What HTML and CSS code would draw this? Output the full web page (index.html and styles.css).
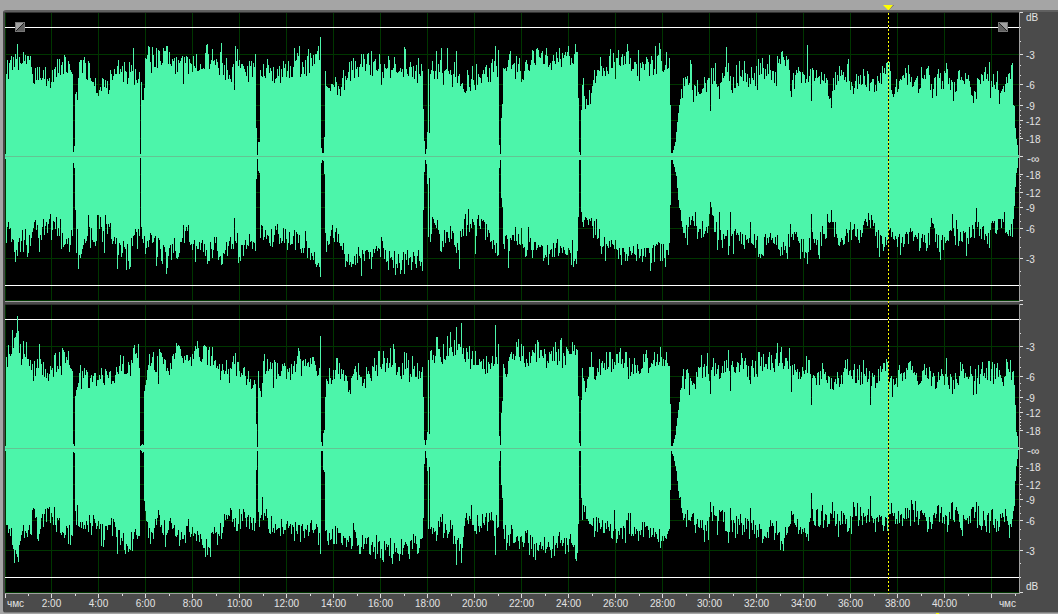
FILE: index.html
```html
<!DOCTYPE html>
<html lang="ru">
<head>
<meta charset="utf-8">
<title>Waveform</title>
<link rel="stylesheet" href="styles.css">
</head>
<body>
<main class="editor">
  <div class="strip"></div>
  <div class="frame">
    <section class="row">
      <div class="view">
        <svg class="wave" data-channel="left" viewBox="0 0 1014 289" preserveAspectRatio="none" role="img" aria-label="Left channel"></svg>
        <button class="fade fade-in" aria-label="Fade in"><svg viewBox="0 0 10 10"><path class="fade-light" d="M1 1H9L1 9Z"/><path class="fade-dark" d="M9 1V9H1Z"/><path class="fade-edge" d="M1 9L9 1"/></svg></button>
        <button class="fade fade-out" aria-label="Fade out"><svg viewBox="0 0 10 10"><path class="fade-light" d="M1 1H9V9Z"/><path class="fade-dark" d="M1 1V9H9Z"/><path class="fade-edge" d="M1 1L9 9"/></svg></button>
      </div>
      <div class="scale">
        <svg class="ticks" viewBox="0 0 4 289" preserveAspectRatio="none"></svg>
        <div class="levels">
          <div class="g42 unit"><span>dB</span></div>
          <div class="g30"><span>-3</span></div>
          <div class="g21"><span>-6</span></div>
          <div class="g15"><span>-9</span></div>
          <div class="g18"><span>-12</span></div>
          <div class="g18"><span>-18</span></div>
          <div class="g18 inf"><span>-∞</span></div>
          <div class="g18"><span>-18</span></div>
          <div class="g15"><span>-12</span></div>
          <div class="g21"><span>-9</span></div>
          <div class="g30"><span>-6</span></div>
          <div class="g43"><span>-3</span></div>
        </div>
      </div>
    </section>
    <div class="divider"></div>
    <section class="row">
      <div class="view">
        <svg class="wave" data-channel="right" viewBox="0 0 1014 289" preserveAspectRatio="none" role="img" aria-label="Right channel"></svg>
      </div>
      <div class="scale">
        <svg class="ticks" viewBox="0 0 4 289" preserveAspectRatio="none"></svg>
        <div class="levels">
          <div class="g42"></div>
          <div class="g30"><span>-3</span></div>
          <div class="g21"><span>-6</span></div>
          <div class="g15"><span>-9</span></div>
          <div class="g18"><span>-12</span></div>
          <div class="g18"><span>-18</span></div>
          <div class="g18 inf"><span>-∞</span></div>
          <div class="g18"><span>-18</span></div>
          <div class="g15"><span>-12</span></div>
          <div class="g21"><span>-9</span></div>
          <div class="g30"><span>-6</span></div>
          <div class="g43 last"><span>-3</span><span>dB</span></div>
        </div>
      </div>
    </section>
    <div class="timeline">
      <svg class="time-ticks" viewBox="0 0 1014 4" preserveAspectRatio="none"></svg>
      <div class="times">
        <span class="first">чмс</span><span>2:00</span><span>4:00</span><span>6:00</span><span>8:00</span><span>10:00</span><span>12:00</span><span>14:00</span><span>16:00</span><span>18:00</span><span>20:00</span><span>22:00</span><span>24:00</span><span>26:00</span><span>28:00</span><span>30:00</span><span>32:00</span><span>34:00</span><span>36:00</span><span>38:00</span><span>40:00</span><span class="final">чмс</span>
      </div>
    </div>
    <div class="track">
      <svg class="marker" viewBox="0 0 11 6"><path class="marker-shade" d="M10 0H11L6 5V4Z"/><path class="marker-fill" d="M0 0H10L6 5H5Z"/></svg>
      <div class="cursor"></div>
    </div>
  </div>
  <div class="foot"><i class="cue"></i></div>
</main>
<script src="wave.js"></script>
</body>
</html>
```
FILE: styles.css
```css
* { box-sizing: border-box; }
body {
  margin: 0;
  background: #a5a5a5;
  color: #e4e4e4;
  font: 10px/12px "Liberation Sans", Arial, sans-serif;
}
.editor {
  display: flex;
  flex-direction: column;
  min-height: 100vh;
}
.strip { height: 10px; }
.frame {
  position: relative;
  flex: 1;
  display: flex;
  flex-direction: column;
  margin-left: 3px;
  border-top: 2px solid #606060;
  border-left: 2px solid #484848;
  border-bottom: 1px solid #7e7e7e;
  border-radius: 3px 0 0 3px;
  background: #4b4b4b;
}
.row {
  flex: 1;
  display: grid;
  grid-template-columns: 1fr 39px;
  min-height: 200px;
}
.view {
  position: relative;
  background: #000;
  border-bottom: 1px solid #a0a0a0;
}
.wave {
  position: absolute;
  inset: 0;
  width: 100%;
  height: 100%;
  shape-rendering: crispEdges;
}
.edge { fill: #333; }
.grid { fill: #003600; }
.limit { fill: #fff; }
.body { fill: #4cf5aa; }
.axis { fill: #63c493; }
.fade {
  position: absolute;
  top: 10px;
  width: 10px;
  height: 10px;
  padding: 0;
  border: 0;
  background: #777;
}
.fade svg { display: block; width: 10px; height: 10px; }
.fade-in { left: 10px; }
.fade-out { right: 11px; }
.fade-light { fill: #a0a0a0; }
.fade-dark { fill: #606060; }
.fade-edge { stroke: #222; stroke-width: 1; }
.scale {
  display: flex;
  gap: 3px;
  padding-bottom: 1px;
  border-left: 1px solid #a0a0a0;
}
.ticks { width: 3px; height: 100%; }
.tick { fill: #ddd; shape-rendering: crispEdges; }
.levels {
  flex: 1;
  display: flex;
  flex-direction: column;
}
.levels div { min-height: 0; flex-basis: 0; }
.levels span { display: block; margin-top: -4px; }
.levels .unit span { margin-top: 0; }
.levels .inf span { margin-top: -3px; padding-left: 1px; font-size: 12px; }
.levels .last {
  display: flex;
  flex-direction: column;
  justify-content: space-between;
}
.g42 { flex-grow: 42; }
.g43 { flex-grow: 43; }
.g30 { flex-grow: 30; }
.g21 { flex-grow: 21; }
.g15 { flex-grow: 15; }
.g18 { flex-grow: 18; }
.divider { height: 2px; }
.timeline {
  height: 18px;
  margin-right: 39px;
}
.time-ticks { display: block; width: 100%; height: 4px; }
.times {
  display: grid;
  grid-template-columns: 23fr repeat(20, 47fr) 51fr;
}
.times span {
  min-width: 0;
  text-align: center;
  white-space: nowrap;
}
.times .first { text-align: left; padding-left: 2px; }
.times .final { text-align: right; padding-right: 3px; }
.track {
  position: absolute;
  top: -7px;
  bottom: 18px;
  left: 0;
  right: 39px;
  pointer-events: none;
}
.marker {
  position: absolute;
  left: 87.1%;
  top: 0;
  width: 11px;
  height: 6px;
  margin-left: -5px;
}
.marker-fill { fill: #ff0; }
.marker-shade { fill: #555; }
.cursor {
  position: absolute;
  left: 87.1%;
  top: 8px;
  bottom: 0;
  width: 1px;
  background: repeating-linear-gradient(#ff0 0 2px, #000 2px 4px);
}
.foot { height: 1px; padding-left: 936px; }
.cue { display: block; width: 3px; height: 1px; background: #ff0; }
```
FILE: wave.js
```js
// Envelope points are "x:y" pairs; "spikes" are single columns laid over them.
const channels = {
  left: {
    mid: 156,
    top: "5:76 7:72 10:65 17:58 24:58 31:62 34:82 40:74 45:74 52:76 58:72 65:63 70:70 72:74 73:152 74:146 75:94 77:90 80:66 85:65 90:78 95:82 99:96 104:84 108:86 112:80 118:68 125:78 130:68 136:76 139:72 140:154 141:82 142:100 143:100 144:88 145:60 150:62 160:62 170:58 180:66 190:60 197:68 205:60 212:62 222:68 230:74 240:62 250:72 255:68 256:128 257:155 258:142 259:142 260:70 262:82 266:68 274:76 285:70 295:62 300:72 310:60 319:60 320:37 321:148 322:153 323:153 324:137 325:80 330:84 337:90 345:74 352:68 362:66 372:66 390:67 400:66 412:72 422:71 423:109 424:141 425:154 426:149 427:132 428:69 429:133 430:72 440:74 455:74 465:85 470:80 480:76 490:70 498:70 499:145 500:154 501:118 502:104 503:70 510:62 521:74 530:62 540:58 550:64 560:58 570:60 577:58 578:98 579:152 580:155 581:110 582:83 585:105 590:94 600:70 610:62 620:62 628:58 634:70 645:66 652:62 660:60 668:68 669:58 670:105 671:153 672:153 673:150 675:142 677:122 679:105 681:94 686:80 691:84 697:92 702:84 707:84 714:76 720:84 726:72 731:86 737:76 745:67 750:82 757:80 762:64 767:72 774:80 780:62 788:64 791:90 796:80 803:76 813:74 820:74 826:85 831:96 837:74 842:80 848:72 853:86 860:82 869:86 875:86 880:76 887:64 892:92 899:78 905:74 912:86 918:86 925:72 932:88 938:80 944:78 953:90 958:80 966:76 973:92 980:80 987:74 991:88 996:82 1000:92 1006:84 1012:66 1013:105 1014:106 1015:128 1016:139 1017:145 1018:155",
    topSpikes: "17:44 64:55 133:48 166:46 183:84 206:45 207:44 221:43 234:90 235:46 237:49 255:54 299:46 308:49 337:95 344:90 371:51 381:85 404:47 405:49 436:51 441:48 447:48 456:51 465:93 495:46 498:50 510:51 521:82 536:49 546:48 568:46 577:52 613:53 615:79 626:52 638:50 659:43 690:60 691:64 693:102 710:111 713:68 719:99 726:47 758:59 762:58 769:55 777:56 779:59 791:97 807:45 811:101 831:108 839:66 863:69 887:62 908:65 921:67 928:66 932:98 946:63 953:101 973:103 976:99 989:62 990:98 999:104 1012:63",
    bottom: "5:230 9:226 13:248 18:252 22:236 28:243 34:228 38:240 42:224 50:225 55:226 60:236 66:242 72:235 73:162 74:167 75:209 76:250 77:228 78:260 82:240 88:230 95:243 98:222 104:240 107:226 112:236 119:248 126:244 130:252 134:238 139:235 140:155 141:232 145:240 150:238 160:245 166:256 172:246 180:250 184:228 190:240 200:242 208:256 215:240 222:254 230:243 234:234 239:252 245:236 255:250 256:178 257:158 258:170 259:172 260:230 270:235 285:232 295:243 305:236 310:252 316:260 319:266 320:276 321:162 322:159 323:160 324:173 325:242 330:230 340:238 347:258 355:256 361:260 370:252 381:246 386:255 395:260 405:260 413:254 422:262 423:209 424:171 425:159 426:163 427:183 428:236 429:177 430:235 433:222 440:235 447:228 459:244 465:225 475:224 482:224 490:235 498:254 499:167 500:159 501:197 502:206 503:238 510:240 520:240 530:244 545:250 560:248 572:252 577:250 578:216 579:159 580:159 581:211 582:215 585:208 590:220 600:238 605:248 612:240 618:250 625:255 632:250 640:248 650:255 660:248 668:254 669:242 670:204 671:159 672:159 674:166 676:175 678:199 680:215 684:224 690:220 697:225 700:224 706:232 710:204 715:225 722:236 730:245 736:234 745:243 750:232 760:247 768:236 775:235 780:248 787:248 790:228 796:230 800:244 807:252 812:230 819:242 823:228 831:214 838:238 845:235 851:225 858:234 866:220 873:222 879:240 887:240 891:222 897:235 902:242 910:234 919:240 926:240 932:226 940:240 948:240 953:226 958:235 966:238 975:222 980:230 989:238 991:220 998:225 1005:225 1012:236 1013:218 1014:205 1015:186 1016:172 1017:167 1018:155",
    bottomSpikes: "39:251 60:218 76:252 78:268 88:214 97:214 105:214 117:268 126:269 129:268 130:266 156:265 166:273 183:224 195:261 207:263 221:264 234:217 238:262 361:275 371:268 381:236 404:273 411:269 422:270 435:224 441:251 459:268 465:213 468:208 475:253 508:267 515:226 521:227 528:226 605:260 650:270 687:244 710:201 717:249 719:211 730:211 760:257 787:258 750:221 807:263 811:213 819:258 831:209 879:256 900:254 919:250 926:250 940:259 952:213 966:255 976:207 989:247 1004:211"
  },
  right: {
    mid: 448,
    top: "5:366 8:360 11:345 15:342 18:331 19:358 22:361 28:360 33:374 37:366 41:370 50:372 58:366 65:362 70:368 72:371 73:444 74:446 75:390 78:380 85:375 95:378 105:371 113:378 120:366 130:370 134:352 139:368 140:446 141:445 142:444 143:445 144:391 146:380 148:360 155:366 160:356 165:360 168:370 175:358 180:356 185:364 190:356 195:352 203:356 210:358 218:368 227:374 235:368 245:376 255:384 256:424 257:447 258:375 261:391 264:368 270:362 278:370 286:372 298:362 310:367 319:368 320:336 321:442 322:446 323:433 324:430 325:395 328:378 332:392 335:366 340:374 346:376 348:386 356:374 365:382 370:376 378:362 386:366 394:358 397:376 404:368 412:370 420:378 422:367 423:397 424:440 425:445 426:440 427:432 428:360 429:434 430:358 436:350 440:358 447:352 455:348 460:348 465:360 475:362 485:367 498:364 499:436 500:445 501:413 502:401 503:370 510:360 517:352 525:362 535:354 542:354 550:359 560:354 565:358 572:350 577:350 578:396 579:443 580:446 581:400 582:371 586:393 590:368 600:370 610:362 620:362 628:368 640:367 650:363 660:358 668:366 669:366 670:404 671:446 672:446 673:443 675:435 677:418 679:402 681:378 686:376 695:380 701:366 710:376 715:370 720:374 727:362 737:368 745:360 750:378 757:365 765:362 774:368 783:360 790:361 796:374 805:372 808:364 815:380 820:374 827:378 832:384 838:380 845:374 850:376 857:376 866:378 875:378 882:376 887:368 892:384 899:372 905:378 910:372 918:381 926:374 936:380 940:378 952:384 960:375 967:376 973:384 976:378 985:372 996:376 1003:378 1010:368 1014:385 1015:405 1016:432 1017:436 1018:448",
    topSpikes: "17:316 23:341 26:342 39:344 62:348 64:352 68:351 133:348 138:344 158:384 159:349 179:346 195:346 203:346 209:347 235:353 273:388 299:351 320:336 336:358 379:351 383:351 394:349 404:352 406:353 436:337 447:336 450:332 456:327 461:323 475:351 495:325 498:344 523:346 535:344 561:338 572:342 591:352 610:352 625:352 626:352 628:379 657:354 689:395 707:353 710:394 728:350 730:391 759:352 769:352 777:343 750:384 791:392 811:405 808:360 847:359 863:360 870:405 887:362 892:397 908:363 924:364 946:358 952:394 962:364 973:395 976:394 989:361 1010:360",
    bottom: "5:522 9:526 14:545 18:548 22:530 27:540 33:512 38:530 42:512 50:516 55:518 60:525 65:531 68:536 72:535 73:451 74:452 75:506 78:518 83:527 90:520 98:525 103:535 107:526 115:522 122:537 127:540 133:535 139:535 140:449 141:450 142:452 143:451 144:500 146:520 150:530 158:522 165:533 172:522 180:538 187:524 195:536 203:542 210:545 213:528 220:529 228:520 236:524 243:514 250:522 255:522 256:469 257:450 258:518 262:505 265:520 272:528 280:520 285:530 295:528 305:534 312:524 319:532 320:552 321:450 322:450 323:469 324:471 325:530 335:538 345:538 353:535 361:540 372:546 380:546 390:550 402:550 410:546 420:538 422:537 423:517 424:463 425:450 426:457 427:470 428:528 429:466 430:530 440:523 452:530 459:536 463:536 465:514 475:518 482:518 490:516 498:526 499:460 500:450 501:484 502:497 503:535 510:534 515:540 525:541 535:545 545:546 554:546 560:540 570:546 577:552 578:523 579:450 580:450 581:497 582:510 588:514 595:528 600:522 610:530 620:532 630:526 640:532 650:530 660:535 668:530 669:528 670:489 671:450 673:455 676:470 678:490 680:503 684:518 689:512 695:520 700:524 707:532 710:512 715:522 720:514 728:528 737:524 745:530 752:522 758:533 765:535 771:524 780:540 787:530 791:516 797:520 803:526 807:530 812:512 820:520 825:512 830:514 838:522 842:516 848:524 855:512 862:518 870:514 875:520 882:519 887:522 891:508 900:520 905:514 915:508 922:514 927:524 937:515 945:520 952:514 960:520 967:524 972:510 982:515 989:522 992:515 998:518 1005:520 1011:526 1013:510 1014:505 1015:480 1016:465 1017:458 1018:449",
    bottomSpikes: "14:562 18:561 16:553 33:507 38:540 68:543 103:546 117:553 158:509 207:554 210:556 230:507 320:553 383:561 456:564 459:550 461:562 495:554 466:512 554:555 614:509 628:512 630:512 710:501 730:507 717:534 750:507 780:549 762:542 811:492 808:540 832:501 838:536 853:501 857:502 870:495 875:531 887:530 891:502 915:500 927:531 937:505 952:501 972:506 976:501 989:532 992:508 1009:537"
  }
};

const NS = "http://www.w3.org/2000/svg";
const add = (svg, name, cls, attrs) => {
  const el = document.createElementNS(NS, name);
  el.setAttribute("class", cls);
  for (const key in attrs) el.setAttribute(key, attrs[key]);
  svg.appendChild(el);
};
const rect = (svg, cls, x, y, width, height) => add(svg, "rect", cls, { x, y, width, height });
const parse = text => text.split(" ").map(pair => pair.split(":").map(Number));

function levels(points, spikes, mid, seed) {
  const out = [];
  const keys = parse(points).map(([x, y]) => [x - 5, Math.abs(y - mid)]);
  const random = () => {
    seed = (seed * 16807) % 2147483647;
    return seed / 2147483647;
  };
  for (let i = 0; i < keys.length - 1; i++) {
    const [x0, a0] = keys[i];
    const [x1, a1] = keys[i + 1];
    for (let x = x0; x < x1; x++) {
      const level = a0 + (a1 - a0) * (x - x0) / (x1 - x0);
      const rough = x1 - x0 > 2 && level > 50;
      const r = random();
      const jump = r > 0.82 ? 6 + 9 * random() : r < 0.12 ? -5 - 8 * random() : (random() - 0.5) * 15;
      out[x] = Math.round(level + (rough ? jump : 0));
    }
  }
  out[1013] = 1;
  for (const [x, y] of parse(spikes)) out[x - 5] = Math.abs(y - mid);
  out[0] = 2;
  return out;
}

document.querySelectorAll(".wave").forEach((svg, index) => {
  const data = channels[svg.dataset.channel];
  for (const d of [18, 36, 51, 72, 102]) {
    rect(svg, "grid", 0, 144 - d, 1014, 1);
    rect(svg, "grid", 0, 144 + d, 1014, 1);
  }
  rect(svg, "grid", 0, 288, 1014, 1);
  rect(svg, "grid", 0, 0, 1, 289);
  for (let x = 46; x < 1014; x += 47) rect(svg, "grid", x, 0, 1, 289);
  rect(svg, "edge", 0, 0, 1014, 1);
  rect(svg, "limit", 0, 15, 1014, 1);
  rect(svg, "limit", 0, 273, 1014, 1);
  const up = levels(data.top, data.topSpikes, data.mid, 7123 + index * 5501);
  const down = levels(data.bottom, data.bottomSpikes, data.mid, 90731 + index * 3307);
  let d = "";
  for (let x = 0; x < 1014; x++) {
    d += `M${x} ${144 - up[x]}h1V${145 + down[x]}h-1Z`;
  }
  add(svg, "path", "body", { d });
  rect(svg, "axis", 0, 144, 1014, 1);
});

document.querySelectorAll(".ticks").forEach(svg => {
  for (const d of [0, 18, 36, 51, 72, 102, 144]) {
    rect(svg, "tick", 0, 144 - d, 4, 1);
    rect(svg, "tick", 0, 144 + d, 4, 1);
  }
  for (const d of [20, 23, 26, 29, 32, 41, 46, 58, 65, 81, 91, 115, 129]) {
    rect(svg, "tick", 0, 144 - d, 1, 1);
    rect(svg, "tick", 0, 144 + d, 1, 1);
  }
});

const time = document.querySelector(".time-ticks");
rect(time, "tick", 0, 0, 1, 4);
for (let x = 46; x < 990; x += 47) rect(time, "tick", x, 0, 1, 4);
for (let x = 23; x < 1014; x += 47) rect(time, "tick", x, 0, 1, 2);
rect(time, "tick", 1010, 0, 1, 2);
```
